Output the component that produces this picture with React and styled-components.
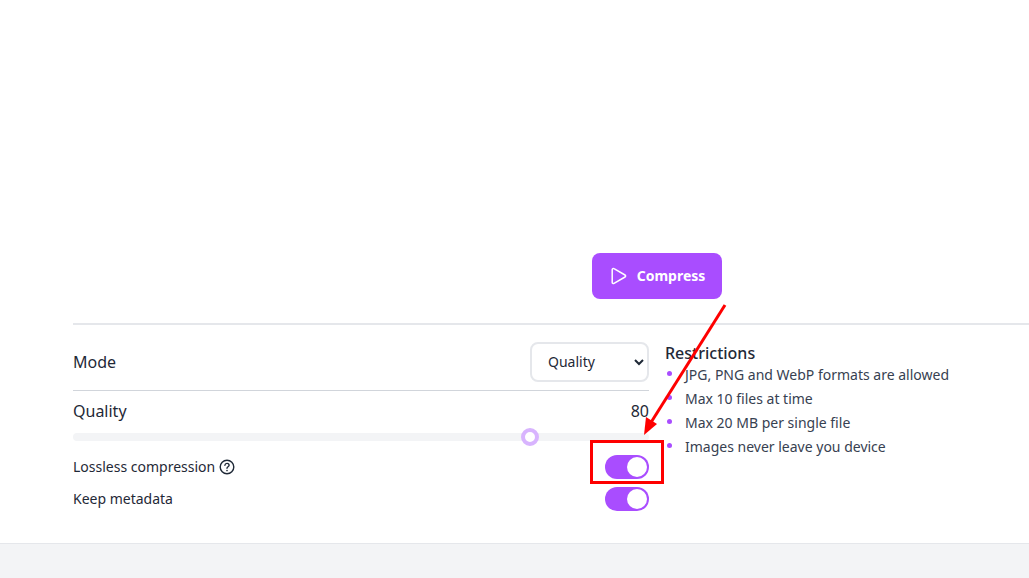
import React from "react";
import styled, { createGlobalStyle } from "styled-components";

const Global = createGlobalStyle`
  html, body { margin: 0; padding: 0; background: #fff; }
  body { font-family: "Noto Sans", "Open Sans", sans-serif; color: #1f2937; overflow: hidden; }
`;

const Page = styled.div`
  position: relative;
  width: 1029px;
  height: 578px;
  overflow: hidden;
  display: flex;
  flex-direction: column;
`;
const Main = styled.main`
  height: 543px;
  padding: 253px 0 0 73px;
  box-sizing: border-box;
  flex: none;
`;
const Container = styled.div`
  width: 1168px;
`;
const ActionRow = styled.div`
  display: flex;
  justify-content: center;
  padding-bottom: 24px;
  border-bottom: 2px solid #e5e7eb;
`;
const CompressButton = styled.button`
  width: 130px;
  height: 46px;
  border: 0;
  border-radius: 8px;
  background: #a94dff;
  color: #fff;
  font: 700 14px "Noto Sans", sans-serif;
  display: flex;
  align-items: center;
  justify-content: center;
  gap: 8px;
  padding: 0;
`;
const ButtonText = styled.span`
  margin-top: -2px;
`;
const Columns = styled.div`
  display: grid;
  grid-template-columns: 1fr 1fr;
  column-gap: 16px;
  padding-top: 17px;
`;
const Settings = styled.div`
  display: flex;
  flex-direction: column;
`;
const ModeRow = styled.div`
  display: flex;
  justify-content: space-between;
  align-items: center;
  height: 40px;
  padding-bottom: 8px;
  border-bottom: 1px solid #d1d5db;
`;
const Label = styled.span`
  font-size: 16px;
  line-height: 24px;
  color: #1f2937;
`;
const ModeSelect = styled.select`
  width: 119px;
  height: 40px;
  box-sizing: border-box;
  border: 2px solid #e5e7eb;
  border-radius: 8px;
  background: #fff;
  color: #1f2937;
  font: 14px "Noto Sans", sans-serif;
  padding: 0 0 2px 12px;
`;
const QualityRow = styled.div`
  display: flex;
  justify-content: space-between;
  align-items: center;
  margin-top: 8px;
  height: 24px;
`;
const Track = styled.div`
  position: relative;
  height: 8px;
  margin-top: 10px;
  border-radius: 4px;
  background: #f3f4f6;
`;
const Thumb = styled.div`
  position: absolute;
  top: -5px;
  width: 18px;
  height: 18px;
  box-sizing: border-box;
  border-radius: 50%;
  background: #fff;
  border: 4px solid #d8b4fe;
`;
const ToggleRow = styled.div`
  display: flex;
  justify-content: space-between;
  align-items: center;
  height: 24px;
  margin-top: ${(p) => p.$gap}px;
`;
const SmallLabel = styled.span`
  display: flex;
  align-items: center;
  gap: 4px;
  font-size: 14px;
  line-height: 20px;
  color: #1f2937;
`;
const Toggle = styled.div`
  width: 44px;
  height: 24px;
  box-sizing: border-box;
  border-radius: 12px;
  background: #a94dff;
  padding: 2px;
  display: flex;
  justify-content: flex-end;
`;
const Knob = styled.div`
  width: 20px;
  height: 20px;
  border-radius: 50%;
  background: #fff;
`;
const Restrictions = styled.section`
  display: flex;
  flex-direction: column;
`;
const Title = styled.h3`
  margin: 0 0 -1px;
  font-size: 16px;
  font-weight: 500;
  line-height: 22px;
  color: #1f2937;
`;
const List = styled.ul`
  margin: 0;
  padding: 0;
  list-style: none;
`;
const Item = styled.li`
  position: relative;
  height: 24px;
  padding-left: 20px;
  font-size: 14px;
  line-height: 24px;
  color: #374151;
  &::before {
    content: "";
    position: absolute;
    left: 2px;
    top: 8px;
    width: 5px;
    height: 5px;
    border-radius: 50%;
    background: #a94dff;
  }
`;
const Footer = styled.footer`
  flex: 1;
  background: #f3f4f6;
  border-top: 1px solid #e5e7eb;
`;
const HighlightBox = styled.div`
  position: absolute;
  left: 590px;
  top: 440px;
  width: 74px;
  height: 44px;
  box-sizing: border-box;
  border: 3px solid #fe0000;
`;
const ArrowOverlay = styled.svg`
  position: absolute;
  left: 0;
  top: 0;
  pointer-events: none;
`;

const PlayIcon = () => (
  <svg width="20" height="20" viewBox="0 0 20 20" fill="none" stroke="#fff" strokeWidth="1.5" strokeLinejoin="round" strokeLinecap="round">
    <path d="M3.2 3.6c0-1 1-1.5 1.8-1l11 6.4c.8.5.8 1.6 0 2L5 17.4c-.8.5-1.8 0-1.8-1z" />
  </svg>
);

const HelpIcon = () => (
  <svg width="16" height="16" viewBox="0 0 16 16" fill="none" stroke="#1f2937" strokeWidth="1.4" strokeLinecap="round">
    <circle cx="8" cy="8" r="6.8" />
    <path d="M5.9 6.3c.1-1.2 1-1.9 2.1-1.9 1.2 0 2.1.7 2.1 1.8 0 1.6-2.1 1.5-2.1 3" />
    <path d="M8 11.5v.1" strokeWidth="1.6" />
  </svg>
);

export default function App() {
  return (
    <Page>
      <Global />
      <Main>
        <Container>
          <ActionRow>
            <CompressButton>
              <PlayIcon />
              <ButtonText>Compress</ButtonText>
            </CompressButton>
          </ActionRow>
          <Columns>
            <Settings>
              <ModeRow>
                <Label>Mode</Label>
                <ModeSelect defaultValue="Quality">
                  <option>Quality</option>
                </ModeSelect>
              </ModeRow>
              <QualityRow>
                <Label>Quality</Label>
                <Label>80</Label>
              </QualityRow>
              <Track>
                <Thumb style={{ left: `${(448 / 576) * 100}%` }} />
              </Track>
              <ToggleRow $gap={14}>
                <SmallLabel>
                  Lossless compression
                  <HelpIcon />
                </SmallLabel>
                <Toggle>
                  <Knob />
                </Toggle>
              </ToggleRow>
              <ToggleRow $gap={8}>
                <SmallLabel>Keep metadata</SmallLabel>
                <Toggle>
                  <Knob />
                </Toggle>
              </ToggleRow>
            </Settings>
            <Restrictions>
              <Title>Restrictions</Title>
              <List>
                <Item>JPG, PNG and WebP formats are allowed</Item>
                <Item>Max 10 files at time</Item>
                <Item>Max 20 MB per single file</Item>
                <Item>Images never leave you device</Item>
              </List>
            </Restrictions>
          </Columns>
        </Container>
      </Main>
      <Footer />
      <HighlightBox />
      <ArrowOverlay width="1029" height="578" viewBox="0 0 1029 578">
        <line x1="725" y1="305" x2="650" y2="424" stroke="#fe0000" strokeWidth="3" />
        <polygon points="644,435 646,417 657,424" fill="#fe0000" />
      </ArrowOverlay>
    </Page>
  );
}
